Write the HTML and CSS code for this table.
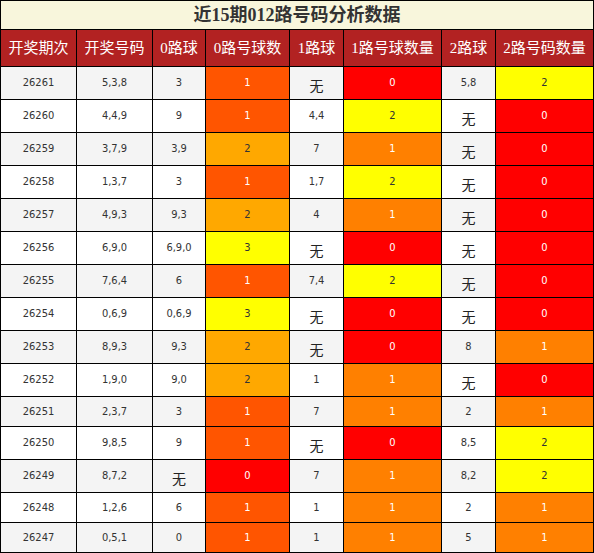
FILE: index.html
```html
<!DOCTYPE html>
<html lang="zh-CN">
<head>
<meta charset="utf-8">
<title>近15期012路号码分析数据</title>
<link rel="stylesheet" href="styles.css">
</head>
<body>
<table class="grid">
  <colgroup>
    <col class="c-issue"><col class="c-draw"><col class="c-r0"><col class="c-r0n">
    <col class="c-r1"><col class="c-r1n"><col class="c-r2"><col class="c-r2n">
  </colgroup>
  <thead>
    <tr class="title-row"><th colspan="8" class="title">近15期012路号码分析数据</th></tr>
    <tr class="head-row">
      <th>开奖期次</th><th>开奖号码</th><th>0路球</th><th>0路号球数</th>
      <th>1路球</th><th>1路号球数量</th><th>2路球</th><th>2路号码数量</th>
    </tr>
  </thead>
  <tbody>
    <tr class="odd tall"><td>26261</td><td>5,3,8</td><td>3</td><td class="v-a">1</td><td class="none">无</td><td class="v-r">0</td><td>5,8</td><td class="v-y">2</td></tr>
    <tr class="even tall"><td>26260</td><td>4,4,9</td><td>9</td><td class="v-a">1</td><td>4,4</td><td class="v-y">2</td><td class="none">无</td><td class="v-r">0</td></tr>
    <tr class="odd tall"><td>26259</td><td>3,7,9</td><td>3,9</td><td class="v-o">2</td><td>7</td><td class="v-b">1</td><td class="none">无</td><td class="v-r">0</td></tr>
    <tr class="even tall"><td>26258</td><td>1,3,7</td><td>3</td><td class="v-a">1</td><td>1,7</td><td class="v-y">2</td><td class="none">无</td><td class="v-r">0</td></tr>
    <tr class="odd tall"><td>26257</td><td>4,9,3</td><td>9,3</td><td class="v-o">2</td><td>4</td><td class="v-b">1</td><td class="none">无</td><td class="v-r">0</td></tr>
    <tr class="even tall"><td>26256</td><td>6,9,0</td><td>6,9,0</td><td class="v-y">3</td><td class="none">无</td><td class="v-r">0</td><td class="none">无</td><td class="v-r">0</td></tr>
    <tr class="odd tall"><td>26255</td><td>7,6,4</td><td>6</td><td class="v-a">1</td><td>7,4</td><td class="v-y">2</td><td class="none">无</td><td class="v-r">0</td></tr>
    <tr class="even tall"><td>26254</td><td>0,6,9</td><td>0,6,9</td><td class="v-y">3</td><td class="none">无</td><td class="v-r">0</td><td class="none">无</td><td class="v-r">0</td></tr>
    <tr class="odd tall"><td>26253</td><td>8,9,3</td><td>9,3</td><td class="v-o">2</td><td class="none">无</td><td class="v-r">0</td><td>8</td><td class="v-b">1</td></tr>
    <tr class="even tall"><td>26252</td><td>1,9,0</td><td>9,0</td><td class="v-o">2</td><td>1</td><td class="v-b">1</td><td class="none">无</td><td class="v-r">0</td></tr>
    <tr class="odd"><td>26251</td><td>2,3,7</td><td>3</td><td class="v-a">1</td><td>7</td><td class="v-b">1</td><td>2</td><td class="v-b">1</td></tr>
    <tr class="even tall"><td>26250</td><td>9,8,5</td><td>9</td><td class="v-a">1</td><td class="none">无</td><td class="v-r">0</td><td>8,5</td><td class="v-y">2</td></tr>
    <tr class="odd tall"><td>26249</td><td>8,7,2</td><td class="none">无</td><td class="v-r">0</td><td>7</td><td class="v-b">1</td><td>8,2</td><td class="v-y">2</td></tr>
    <tr class="even"><td>26248</td><td>1,2,6</td><td>6</td><td class="v-a">1</td><td>1</td><td class="v-b">1</td><td>2</td><td class="v-b">1</td></tr>
    <tr class="odd"><td>26247</td><td>0,5,1</td><td>0</td><td class="v-a">1</td><td>1</td><td class="v-b">1</td><td>5</td><td class="v-b">1</td></tr>
  </tbody>
</table>
</body>
</html>
```
FILE: styles.css
```css
html, body {
  margin: 0;
  padding: 0;
  background: #fff;
}

.grid {
  width: 594px;
  table-layout: fixed;
  border-collapse: collapse;
  font-family: "DejaVu Sans Condensed", "DejaVu Sans", "Liberation Sans", sans-serif;
  font-stretch: condensed;
  font-size: 11px;
  color: #333;
}

.c-issue { width: 76px; }
.c-draw { width: 76px; }
.c-r0 { width: 53px; }
.c-r0n { width: 84px; }
.c-r1 { width: 54px; }
.c-r1n { width: 98px; }
.c-r2 { width: 54px; }
.c-r2n { width: 98px; }

.grid th,
.grid td {
  border: 1px solid #000;
  padding: 0;
  text-align: center;
  vertical-align: middle;
  overflow: hidden;
  white-space: nowrap;
}

.title-row { height: 29px; }

.title {
  background: #f8f6dc;
  color: #333;
  font-family: "Liberation Serif", "Noto Sans CJK SC", serif;
  font-stretch: normal;
  font-size: 18px;
  font-weight: bold;
  line-height: 20px;
}

.head-row { height: 37px; }

.head-row th {
  background: #b22222;
  color: #fff;
  font-family: "Liberation Serif", "Noto Sans CJK SC", serif;
  font-stretch: normal;
  font-size: 15px;
  font-weight: normal;
  line-height: 18px;
}

tbody tr { height: 30px; }
tbody tr.tall { height: 33px; }

tr.odd td { background: #f4f4f4; }
tr.even td { background: #fff; }

.grid td { line-height: 14px; }

.grid td.none {
  font-family: "Noto Sans CJK SC", sans-serif;
  font-stretch: normal;
  font-size: 14px;
  color: #222;
  padding-top: 3px;
}

.grid td.v-a { background: #ff5500; color: #fff; }
.grid td.v-o { background: #ffa800; color: #333; }
.grid td.v-y { background: #ffff00; color: #333; }
.grid td.v-r { background: #ff0000; color: #fff; }
.grid td.v-b { background: #ff8000; color: #fff; }
```
